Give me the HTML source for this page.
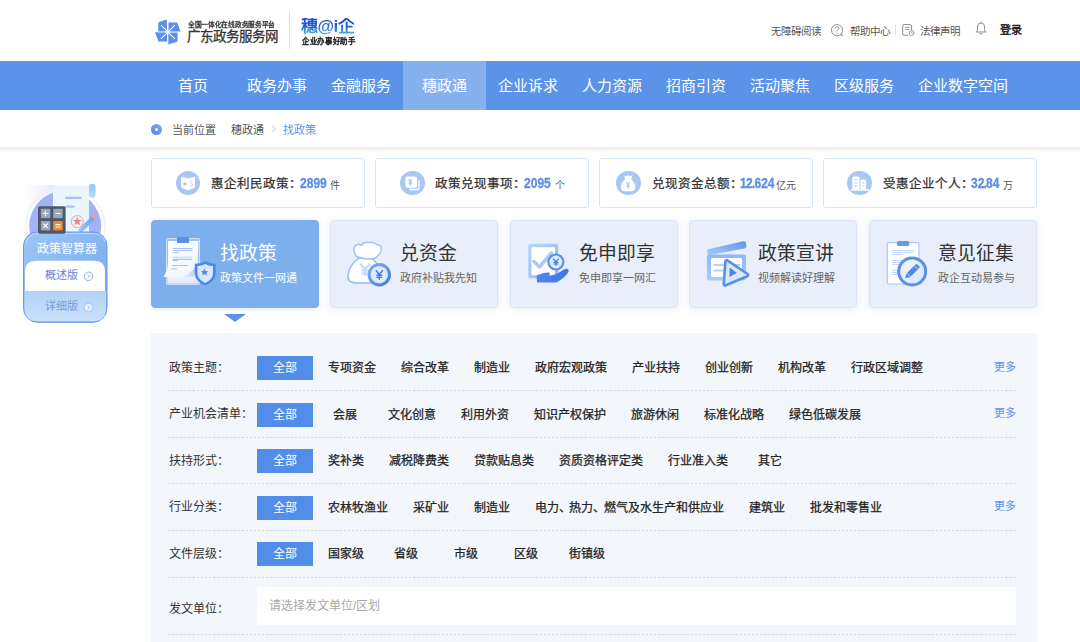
<!DOCTYPE html>
<html lang="zh-CN">
<head>
<meta charset="utf-8">
<style>
*{margin:0;padding:0;box-sizing:border-box}
html,body{width:1080px;height:642px;overflow:hidden;background:#fff;font-family:"Liberation Sans",sans-serif;color:#333}
.abs{position:absolute}
.t{position:absolute;white-space:nowrap;line-height:1}
svg{position:absolute;overflow:visible}
#nav{position:absolute;left:0;top:61px;width:1080px;height:49px;background:#5b93e8}
.nv{position:absolute;top:0;height:49px;line-height:50px;color:#fff;font-size:15px;text-align:center}
#shadow{position:absolute;left:0;top:147px;width:1080px;height:6px;background:linear-gradient(#ededed,#fff)}
.stat{position:absolute;top:158px;height:50px;width:214px;border:1px solid #d8e5f9;border-radius:3px;background:#fff}
.sic{position:absolute;top:170.5px;width:24.5px;height:24.5px;border-radius:50%;background:#a8c7f3}
.sl{position:absolute;top:178px;font-size:12.5px;-webkit-text-stroke:.25px #333;color:#333;line-height:1;white-space:nowrap}
.sn{position:absolute;top:175.5px;font-size:14.5px;font-weight:bold;color:#5b8fe6;-webkit-text-stroke:.3px #5b8fe6;line-height:1;white-space:nowrap;transform-origin:0 0;transform:scaleX(.83)}
.su{position:absolute;top:180.5px;font-size:10px;color:#555;line-height:1;white-space:nowrap}
.card{position:absolute;top:219.6px;height:88px;width:168px;border-radius:4px;background:#e9effa;border:1px solid #d9e6f9;box-shadow:0 1px 8px rgba(70,90,130,.12)}
.tt{position:absolute;top:244.5px;font-size:18.8px;color:#333;line-height:1;white-space:nowrap}
.st{position:absolute;top:273.3px;font-size:11px;color:#666;line-height:1;white-space:nowrap}
#panel{position:absolute;left:151px;top:333px;width:886px;height:320px;background:#f3f6fb}
.lbl{position:absolute;left:169px;font-size:12px;color:#333;line-height:1;white-space:nowrap}
.items{position:absolute;left:257px;height:24px;display:flex}
.it{min-width:55px;padding:0 10px;margin-left:5px;height:24px;line-height:24px;font-size:12px;-webkit-text-stroke:.25px #222;color:#222;text-align:center;white-space:nowrap}
.it.on{background:#528dea;color:#fff;margin-left:0;min-width:55.6px;-webkit-text-stroke:0}
.dash{position:absolute;left:168px;width:848px;height:1px;background:repeating-linear-gradient(90deg,#d6dce6 0 2.6px,transparent 2.6px 4.0826px)}
.more{position:absolute;left:994px;font-size:11px;color:#5b93e8;line-height:1}
.dun{margin-right:-1.5px}
.dot{margin:0 -1px}
</style>
</head>
<body>
<!-- ===== header ===== -->
<svg style="left:150px;top:14px" width="36" height="36" viewBox="0 0 36 36">
  <g fill="#5a90e8">
    <path d="M8.3 8.3 L16.9 5.5 L17.1 17.2 L8.3 17.2 Z"/>
    <path d="M18.5 8.4 L27.2 8.4 L30.6 17.4 L18.5 17.4 Z"/>
    <path d="M5 18.3 L17.1 18.3 L17.1 27.6 L8.4 27.6 Z"/>
    <path d="M18.3 19 L27.6 19 L27.6 27.6 L18.3 30.6 Z"/>
  </g>
  <rect x="8.3" y="17.2" width="19.3" height="1.6" fill="#a9c6f4"/>
  <g stroke="#fff" stroke-width="1.15">
    <line x1="11" y1="11.2" x2="24.8" y2="24.8"/>
    <line x1="24.8" y1="11.2" x2="11" y2="24.8"/>
  </g>
  <circle cx="18" cy="18" r="2" fill="#fff"/>
</svg>
<div class="t" style="left:187.6px;top:21.3px;font-size:13.5px;letter-spacing:.4px;color:#333;-webkit-text-stroke:.6px #333;transform:scale(.5);transform-origin:0 0">全国一体化在线政务服务平台</div>
<div class="t" style="left:186.5px;top:30px;font-size:13.5px;color:#333;-webkit-text-stroke:.3px #333">广东政务服务网</div>
<div class="abs" style="left:289px;top:11px;width:1px;height:38px;background:#dedede"></div>
<div class="t" style="left:301px;top:18px;font-size:17px;font-weight:bold;background:linear-gradient(#1a4ad8 15%,#2468d8 55%,#48b6dc 95%);-webkit-background-clip:text;background-clip:text;color:transparent;letter-spacing:-0.5px">穗@i企</div>
<div class="t" style="left:301.8px;top:38.3px;font-size:14.9px;letter-spacing:.4px;color:#222;-webkit-text-stroke:.9px #222;transform:scale(.5);transform-origin:0 0">企业办事好助手</div>

<div class="t" style="left:771px;top:25.5px;font-size:10.5px;color:#555">无障碍阅读</div>
<svg style="left:830px;top:23px" width="14" height="14" viewBox="0 0 14 14">
  <circle cx="7" cy="7.2" r="5.6" fill="none" stroke="#8a8a8a" stroke-width="0.95"/>
  <path d="M10.9 11.3 L12.6 13" stroke="#8a8a8a" stroke-width="1.1"/>
  <path d="M5.2 5.6 Q5.2 3.7 7 3.7 Q8.8 3.7 8.8 5.4 Q8.8 6.5 7.7 7.1 Q7 7.4 7 8.5" fill="none" stroke="#8a8a8a" stroke-width="0.9"/>
  <circle cx="7" cy="10.2" r="0.6" fill="#8a8a8a"/>
</svg>
<div class="t" style="left:850px;top:25.5px;font-size:10.5px;color:#555">帮助中心</div>
<div class="abs" style="left:895px;top:25px;width:1px;height:10px;background:#e0e0e0"></div>
<svg style="left:901.5px;top:24.3px" width="13" height="12" viewBox="0 0 13 12">
  <path d="M9.6 6 V1.9 Q9.6 0.6 8.3 0.6 H2 Q0.7 0.6 0.7 1.9 V10 Q0.7 11.3 2 11.3 H6.3" fill="none" stroke="#8c8c8c" stroke-width="1"/>
  <path d="M2.9 3.4 H7.4 M2.9 5.6 H7.4" stroke="#a0a0a0" stroke-width="1"/>
  <circle cx="9.6" cy="9" r="2.4" fill="#fff" stroke="#8c8c8c" stroke-width=".9"/>
  <path d="M9.6 7.9 V9.1 H10.5" fill="none" stroke="#8c8c8c" stroke-width=".7"/>
</svg>
<div class="t" style="left:920px;top:25.5px;font-size:10.5px;color:#555">法律声明</div>
<svg style="left:974.5px;top:20.5px" width="12" height="14" viewBox="0 0 12 14">
  <path d="M0.6 11 H11.4" stroke="#8c8c8c" stroke-width="1"/>
  <path d="M1.8 11 Q2.4 9.8 2.4 8 V6 Q2.4 2 6 2 Q9.6 2 9.6 6 V8 Q9.6 9.8 10.2 11" fill="none" stroke="#8c8c8c" stroke-width="1"/>
  <path d="M6 0.6 V2" stroke="#8c8c8c" stroke-width="1"/>
  <path d="M4.6 12.4 Q6 13.6 7.4 12.4" fill="none" stroke="#8c8c8c" stroke-width="1"/>
</svg>
<div class="t" style="left:1000px;top:25px;font-size:11px;color:#1a1a1a;-webkit-text-stroke:.45px #1a1a1a">登录</div>

<!-- ===== nav ===== -->
<div id="nav">
  <div class="nv" style="left:402.5px;width:83px;background:#86b1ef"></div>
  <div class="nv" style="left:151px;width:84px">首页</div>
  <div class="nv" style="left:235px;width:84px">政务办事</div>
  <div class="nv" style="left:319px;width:84px">金融服务</div>
  <div class="nv" style="left:402.5px;width:83px">穗政通</div>
  <div class="nv" style="left:486px;width:84px">企业诉求</div>
  <div class="nv" style="left:570px;width:84px">人力资源</div>
  <div class="nv" style="left:654px;width:84px">招商引资</div>
  <div class="nv" style="left:738px;width:84px">活动聚焦</div>
  <div class="nv" style="left:822px;width:84px">区级服务</div>
  <div class="nv" style="left:906px;width:114px">企业数字空间</div>
</div>

<!-- ===== breadcrumb ===== -->
<div class="abs" style="left:151.3px;top:123.5px;width:11px;height:11px;border-radius:50%;background:linear-gradient(45deg,#4a86e6,#7aaef0)"></div>
<div class="abs" style="left:155.3px;top:127.5px;width:3px;height:3px;border-radius:50%;background:#fff"></div>
<div class="t" style="left:172px;top:124.5px;font-size:11px;color:#555">当前位置</div>
<div class="t" style="left:231px;top:124.5px;font-size:11px;color:#555">穗政通</div>
<svg style="left:271px;top:125px" width="6" height="8" viewBox="0 0 6 8"><path d="M1 0.8 L4.6 4 L1 7.2" fill="none" stroke="#b8b8b8" stroke-width="0.8"/></svg>
<div class="t" style="left:283px;top:124.5px;font-size:11px;color:#5b93e8">找政策</div>
<div id="shadow"></div>

<!-- STATS -->
<div class="stat" style="left:151px"></div>
<div class="stat" style="left:374.6px"></div>
<div class="stat" style="left:598.8px"></div>
<div class="stat" style="left:822.8px"></div>

<div class="sic" style="left:175.9px"></div>
<svg style="left:175.9px;top:170.5px" width="24.5" height="24.5" viewBox="0 0 24.5 24.5">
  <path d="M5.1 5.7 L12.05 7.2 L19 5.7 V16.4 L12.05 19.4 L5.1 16.4 Z" fill="#fff"/>
  <path d="M8.8 10.5 L9.5 12 L11 12.2 L9.9 13.2 L10.2 14.6 L8.8 13.9 L7.5 14.6 L7.8 13.2 L6.7 12.2 L8.2 12 Z" fill="#a8c7f3"/>
  <path d="M16.8 10.8 Q16 10.2 14.9 10.4 Q13.9 10.8 14.3 11.8 Q14.9 12.4 16 12.6 Q17 13 16.7 14 Q16 14.7 14.2 14.2" fill="none" stroke="#c6dbf7" stroke-width="1"/>
</svg>
<div class="sl" style="left:210.5px">惠企利民政策：</div>
<div class="sn" style="left:299.5px">2899</div>
<div class="su" style="left:330px">件</div>

<div class="sic" style="left:400px"></div>
<svg style="left:400px;top:170.5px" width="24.5" height="24.5" viewBox="0 0 24.5 24.5">
  <path d="M9.5 18.5 H17.5 Q19 18.5 19 17 V9" fill="none" stroke="#fff" stroke-width="1.3"/>
  <rect x="5.4" y="5.4" width="11.6" height="11.4" rx="2" fill="#fff"/>
  <path d="M8.6 7.9 L10.3 10.3 L12 7.9 M10.3 10.3 V14.5 M8.6 11 H12 M8.6 12.6 H12" fill="none" stroke="#a8c7f3" stroke-width="1.2"/>
</svg>
<div class="sl" style="left:435px">政策兑现事项：</div>
<div class="sn" style="left:524px">2095</div>
<div class="su" style="left:554.5px">个</div>

<div class="sic" style="left:616px"></div>
<svg style="left:616px;top:170.5px" width="24.5" height="24.5" viewBox="0 0 24.5 24.5">
  <path d="M8 4.6 Q10 5.6 12.2 4.3 Q14.4 5.6 16.4 4.6 L15.2 8.4 Q19.2 10.8 19.2 16.3 Q19.2 20.3 15.5 20.3 H8.7 Q5 20.3 5 16.3 Q5 10.8 9.2 8.4 Z" fill="#fff"/>
  <path d="M10.3 11.3 L12.1 13.5 L13.9 11.3 M12.1 13.5 V17.2 M10.5 14.2 H13.7 M10.5 15.7 H13.7" fill="none" stroke="#a8c7f3" stroke-width="1.1"/>
</svg>
<div class="sl" style="left:651.5px">兑现资金总额：</div>
<div class="sn" style="left:739.5px"><span style="margin-right:-.8px">1</span>2<span class="dot">.</span>624</div>
<div class="su" style="left:776px">亿元</div>

<div class="sic" style="left:847px"></div>
<svg style="left:847px;top:170.5px" width="24.5" height="24.5" viewBox="0 0 24.5 24.5">
  <path d="M5.3 18.6 V7 Q5.3 5.4 6.9 5.4 H10.9 Q12.5 5.4 12.5 7 V18.6 Z" fill="#fff"/>
  <path d="M13.4 18.6 V10 Q13.4 8.5 14.9 8.5 H17.6 Q19.1 8.5 19.1 10 V18.6 Z" fill="#fff"/>
  <rect x="4.1" y="18.3" width="18" height="1.4" fill="#fff"/>
  <path d="M7.3 8.7 H10.3 M7.3 11.9 H10.3 M7.3 15 H10.3 M15 11.9 H17.6 M15 15 H17.6" stroke="#b3cff5" stroke-width="1"/>
</svg>
<div class="sl" style="left:882.5px">受惠企业个人：</div>
<div class="sn" style="left:971px">32<span class="dot">.</span>84</div>
<div class="su" style="left:1003px">万</div>

<!-- CARDS -->
<div class="card" style="left:151px;background:#7cafeb;border-color:#7cafeb;box-shadow:0 1px 5px rgba(90,140,220,.2)"></div>
<div class="card" style="left:330.3px"></div>
<div class="card" style="left:509.7px"></div>
<div class="card" style="left:689.2px"></div>
<div class="card" style="left:868.5px"></div>
<div class="abs" style="left:223.5px;top:314px;width:0;height:0;border-left:11.5px solid transparent;border-right:11.5px solid transparent;border-top:8px solid #5b93e8"></div>

<!-- card1 icon: clipboard + shield -->
<svg style="left:158px;top:230px" width="64" height="64" viewBox="0 0 64 64">
  <defs>
    <linearGradient id="c1b" x1="0" y1="0" x2="0" y2="1"><stop offset="0" stop-color="#f4f8ff"/><stop offset="1" stop-color="#dbe7fc"/></linearGradient>
    <linearGradient id="c1p" x1="0" y1="0" x2="1" y2="1"><stop offset="0" stop-color="#ffffff"/><stop offset=".7" stop-color="#f4f8ff"/><stop offset="1" stop-color="#e3ecfc"/></linearGradient>
    <linearGradient id="c1c" x1="0" y1="1" x2="1" y2="0"><stop offset="0" stop-color="#e9f0fd"/><stop offset="1" stop-color="#9dbcf2"/></linearGradient>
  </defs>
  <rect x="8.5" y="8.5" width="33" height="46" rx="1" fill="rgba(255,255,255,.25)" stroke="rgba(235,243,255,.75)" stroke-width=".9"/>
  <rect x="9.5" y="44" width="31" height="10" fill="url(#c1b)"/>
  <rect x="9.5" y="53.3" width="31" height="1" fill="#b8cff5"/>
  <path d="M10 11 H40.4 L39.6 33.8 Q33 45 25 47 H5.5 Q10 40 10 32 Z" fill="url(#c1p)"/>
  <path d="M25 47 Q33 45 39.6 33.8 Q40.5 43 36 47 Z" fill="url(#c1c)"/>
  <rect x="19" y="7" width="12" height="6" rx="1" fill="#5d8ee8"/>
  <g stroke="#a4c2f3" stroke-width="1">
    <path d="M15 18.5 H34.5 M15 20.5 H34.5 M15 22.5 H21"/>
    <path d="M14.5 29.5 H34 M14.5 30.5 H20"/>
    <path d="M14 35.5 H30 M13 39 H19"/>
  </g>
  <rect x="14.5" y="26.5" width="19.5" height="2" fill="#d2e1fa"/>
  <path d="M47.2 31.3 Q52.5 34.3 57.6 33.6 V43.5 Q57.6 51 47.2 55.6 Q36.8 51 36.8 43.5 V33.6 Q42 34.3 47.2 31.3 Z" fill="#4a86e8"/>
  <path d="M47.2 34.1 Q51.2 36.2 55 35.9 V43.5 Q55 49.2 47.2 52.9 Q39.4 49.2 39.4 43.5 V35.9 Q43.2 36.2 47.2 34.1 Z" fill="#d9e7fc"/>
  <path d="M46.5 38.6 L47.6 40.9 L50.1 41.2 L48.3 42.9 L48.8 45.4 L46.5 44.1 L44.2 45.4 L44.7 42.9 L42.9 41.2 L45.4 40.9 Z" fill="#4a86e8"/>
</svg>
<div class="tt" style="left:219.5px;color:#fff">找政策</div>
<div class="st" style="left:219.5px;color:#fff">政策文件一网通</div>

<!-- card2 icon: money bag -->
<svg style="left:340px;top:234px" width="60" height="60" viewBox="0 0 60 60">
  <defs>
    <linearGradient id="c2c" x1="0" y1="0" x2="1" y2="1"><stop offset="0" stop-color="#7fb0f5"/><stop offset="1" stop-color="#3f7ae6"/></linearGradient>
  </defs>
  <path d="M19 24 Q9 31 8 41 Q7 49 17 49 H33 Q42 49 42 41 Q41 31 31 24 Z" fill="#fff" stroke="#8dbaf5" stroke-width="1.5"/>
  <path d="M16.5 22.5 Q12.5 17 15 12 Q18 9 21.5 11 Q24 7.5 29 8.5 Q34 7.5 37 11 Q41 10 41.5 15 Q40.5 21 35 24 Q26 26.5 16.5 22.5 Z" fill="#fff" stroke="#9cc3f6" stroke-width="1.5"/>
  <path d="M20 29.5 L25 35.5 L30 29.5 M25 35.5 V42 M21.5 36.5 H28.5 M21.5 39.5 H28.5" fill="none" stroke="#c4dbf9" stroke-width="2.2"/>
  <circle cx="39.3" cy="40.7" r="10.2" fill="#dfeafc" stroke="url(#c2c)" stroke-width="3"/>
  <path d="M35.8 36.3 L39.3 40.5 L42.8 36.3 M39.3 40.5 V45.8 M36.3 41.2 H42.3 M36.3 43.4 H42.3" fill="none" stroke="#3f7ae6" stroke-width="1.4"/>
</svg>
<div class="tt" style="left:400px">兑资金</div>
<div class="st" style="left:399.5px">政府补贴我先知</div>

<!-- card3 icon: check + coin + hand -->
<svg style="left:518px;top:234px" width="60" height="60" viewBox="0 0 60 60">
  <defs>
    <linearGradient id="c3b" x1="0" y1="0" x2="1" y2="1"><stop offset="0" stop-color="#b9d7fb"/><stop offset="1" stop-color="#8ab8f5"/></linearGradient>
    <linearGradient id="c3h" x1="0" y1="0" x2="1" y2="0"><stop offset="0" stop-color="#4f88ec"/><stop offset="1" stop-color="#3c76e8"/></linearGradient>
  </defs>
  <rect x="10.2" y="9.8" width="30" height="34.4" rx="2" fill="url(#c3b)"/>
  <rect x="13.5" y="13.3" width="23.5" height="28" rx="1" fill="#fff"/>
  <path d="M16 27.5 L21.5 33 L33.5 19" fill="none" stroke="#a9cbf8" stroke-width="3.5" stroke-linecap="round" stroke-linejoin="round"/>
  <path d="M18.5 41.5 Q26 38 31.5 38.5 Q32.5 40.5 30.5 42 Q38 41 47 35 Q51 34 50.5 38 Q46 45 38 48.5 H19 Z" fill="url(#c3h)"/>
  <circle cx="37.9" cy="28" r="7.5" fill="#e0ebfd" stroke="#5a8fec" stroke-width="2.2"/>
  <path d="M35.2 24.7 L37.9 27.8 L40.6 24.7 M37.9 27.8 V31.8 M35.5 28.4 H40.3 M35.5 30 H40.3" fill="none" stroke="#3f7ae6" stroke-width="1.2"/>
</svg>
<div class="tt" style="left:579px">免申即享</div>
<div class="st" style="left:579px">免申即享一网汇</div>

<!-- card4 icon: clapper + play -->
<svg style="left:698px;top:234px" width="60" height="60" viewBox="0 0 60 60">
  <defs>
    <linearGradient id="c4t" x1="0" y1="1" x2="1" y2="0"><stop offset="0" stop-color="#a9cdfa"/><stop offset="1" stop-color="#5f95ee"/></linearGradient>
    <linearGradient id="c4b" x1="0" y1="0" x2="0" y2="1"><stop offset="0" stop-color="#8ab9f6"/><stop offset="1" stop-color="#a9cdfa"/></linearGradient>
  </defs>
  <path d="M9.3 15.6 L45.3 7.2 Q47.6 6.8 48 9 L48.4 12 Q48.6 14.2 46.5 14.6 L10.3 21.3 Q9.5 21.4 9.4 20.4 Z" fill="url(#c4t)"/>
  <rect x="9" y="20.5" width="39" height="26" rx="2.5" fill="url(#c4b)"/>
  <rect x="13" y="24" width="31" height="19" rx="1.5" fill="#fff"/>
  <path d="M15.5 31 H42 M15.5 36.5 H30" stroke="#b3d2fa" stroke-width="2"/>
  <path d="M29.3 26.3 Q27.6 25.6 27.4 27.6 L25.8 49.8 Q25.7 52 27.9 51.2 L49.3 42.2 Q51.2 41.2 49.6 40 Z" fill="#dbe8fd" stroke="#5a8fec" stroke-width="2.6" stroke-linejoin="round"/>
  <path d="M31.8 33.6 L38.8 39 L31.4 43 Z" fill="#4a84ea"/>
</svg>
<div class="tt" style="left:758px">政策宣讲</div>
<div class="st" style="left:758px">视频解读好理解</div>

<!-- card5 icon: clipboard + pen -->
<svg style="left:878px;top:234px" width="60" height="60" viewBox="0 0 60 60">
  <defs>
    <linearGradient id="c5c" x1="0" y1="0" x2="1" y2="1"><stop offset="0" stop-color="#f3f8ff"/><stop offset="1" stop-color="#d3e3fc"/></linearGradient>
  </defs>
  <rect x="9.3" y="8.6" width="31.6" height="41.4" rx="1" fill="#fff" stroke="#a6c9f6" stroke-width="1.1"/>
  <rect x="19" y="7" width="12.2" height="5" rx="1.5" fill="#6898ec"/>
  <g stroke="#bad3f8" stroke-width=".9">
    <path d="M14 16.5 H36 M14 18.5 H36 M14 20.5 H25"/>
    <path d="M14 26.5 H30 M14 28.5 H30 M14 30.5 H22"/>
    <path d="M14 36.5 H25 M14 38.5 H25 M14 40.5 H20"/>
  </g>
  <circle cx="34.2" cy="37.4" r="13.5" fill="url(#c5c)" stroke="#5a8fec" stroke-width="3"/>
  <path d="M27.3 44.3 L28.3 39.8 L37.5 30.5 Q38.5 29.6 39.5 30.5 L41.2 32.2 Q42 33.2 41.2 34.1 L32 43.3 Z" fill="#4f88ec"/>
  <path d="M29 39.2 L32.7 42.9 M36.3 31.7 L40 35.4" stroke="#dce9fd" stroke-width=".8"/>
</svg>
<div class="tt" style="left:938px">意见征集</div>
<div class="st" style="left:937.5px">政企互动易参与</div>

<!-- WIDGET -->
<svg style="left:10px;top:180px" width="100" height="145" viewBox="0 0 100 145">
  <defs>
    <linearGradient id="wbg" x1="0" y1="0" x2="1" y2="0"><stop offset="0" stop-color="#ffffff" stop-opacity="0"/><stop offset="1" stop-color="#dfe4fb"/></linearGradient>
    <linearGradient id="wpn" x1="0" y1="0" x2="1" y2="1"><stop offset="0" stop-color="#9cc6f4"/><stop offset="1" stop-color="#73a6ee"/></linearGradient>
    <linearGradient id="wlo" x1="0" y1="0" x2="0" y2="1"><stop offset="0" stop-color="#b3d2f8"/><stop offset="1" stop-color="#c9e0fa"/></linearGradient>
    <linearGradient id="wsc" x1="0" y1="0" x2="0" y2="1"><stop offset="0" stop-color="#8ec8f6"/><stop offset="1" stop-color="#b6dcfa"/></linearGradient>
    <linearGradient id="wpen" x1="0" y1="0" x2="1" y2="0"><stop offset="0" stop-color="#9fd0f8"/><stop offset="1" stop-color="#5fa6ee"/></linearGradient>
  </defs>
  <rect x="1" y="5" width="44" height="137.5" fill="url(#wbg)" opacity=".8"/>
  <circle cx="65" cy="226.7" r="0" fill="none"/>
  <circle cx="55.2" cy="46.5" r="39.5" fill="none" stroke="#eef1fd" stroke-width="1.5"/>
  <circle cx="55.2" cy="46.5" r="36" fill="#a2b2f6"/>
  <rect x="43" y="5.5" width="36" height="50" fill="#eaf5fe"/>
  <rect x="79" y="3.7" width="6.5" height="14" rx="3.2" fill="url(#wsc)"/>
  <rect x="79" y="10" width="6.5" height="45" fill="#eaf5fe" opacity="0"/>
  <path d="M56 17.8 H70.5 M56 26.6 H63.8" stroke="#a9c0f5" stroke-width="2.2" stroke-linecap="round"/>
  <circle cx="67.3" cy="41.6" r="6" fill="none" stroke="#f0a0a0" stroke-width="1"/>
  <path d="M67.3 36.8 L68.6 39.9 L71.8 40.1 L69.3 42.2 L70.1 45.3 L67.3 43.6 L64.5 45.3 L65.3 42.2 L62.8 40.1 L66 39.9 Z" fill="#f08686"/>
  <path d="M67.8 50 L81.5 36.3 L84.7 39.5 L71 53.2 L66.8 54.5 Z" fill="url(#wpen)"/>
  <path d="M81.5 36.3 L83 34.8 Q84.6 33.4 86 34.8 Q87.4 36.2 86.2 37.9 L84.7 39.5 Z" fill="#f29a9a"/>
  <path d="M66.8 54.5 L67.8 50 L71 53.2 Z" fill="#fff"/>
  <rect x="13.5" y="52" width="83.5" height="90.3" rx="14" fill="url(#wpn)" stroke="#6a98f0" stroke-width="1"/>
  <path d="M16 64 Q18 53.5 27 53.5 H84 Q93 53.5 95 62" fill="none" stroke="#d5e7fb" stroke-width=".8" opacity=".8"/>
  <rect x="28" y="26.2" width="27.6" height="27.5" rx="1.8" fill="#4e5763"/>
  <rect x="30.8" y="28.8" width="9.5" height="9.5" rx="1" fill="#97a8ba"/>
  <rect x="43.2" y="28.8" width="9.5" height="9.5" rx="1" fill="#97a8ba"/>
  <rect x="30.8" y="41" width="9.5" height="9.5" rx="1" fill="#97a8ba"/>
  <rect x="43.2" y="41" width="9.5" height="9.5" rx="1" fill="#f08a2c"/>
  <path d="M35.5 30.8 V36.3 M32.8 33.5 H38.3 M45.5 33.5 H50.5 M33.4 43.5 L37.7 47.9 M37.7 43.5 L33.4 47.9 M45.5 44.6 H50.5 M45.5 47 H50.5" stroke="#fff" stroke-width="1.1"/>
  <path d="M15 80.7 Q15 80.7 15 91 Q15 80.7 26 80.7 Z" fill="none"/>
  <path d="M15 111 V91.5 Q15 80.7 26 80.7 H84 Q95 80.7 95 91.5 V111 Z" fill="#fff"/>
  <path d="M14.5 111 H96 V128 Q96 141.3 83 141.3 H27.5 Q14.5 141.3 14.5 128 Z" fill="url(#wlo)"/>
  <circle cx="78.5" cy="96.3" r="4.3" fill="none" stroke="#7c9fe0" stroke-width=".8"/>
  <path d="M77.5 94.3 L79.5 96.3 L77.5 98.3" fill="none" stroke="#7c9fe0" stroke-width=".8"/>
  <circle cx="78.5" cy="127.5" r="4.3" fill="#e6f0fc" stroke="#9ab6e6" stroke-width=".8"/>
  <path d="M77.5 125.5 L79.5 127.5 L77.5 129.5" fill="none" stroke="#8eaee4" stroke-width=".8"/>
</svg>
<div class="t" style="left:36.5px;top:242.5px;font-size:12px;color:#fff">政策智算器</div>
<div class="t" style="left:44.5px;top:269.5px;font-size:11px;color:#5c87d8">概述版</div>
<div class="t" style="left:44.5px;top:300.5px;font-size:11px;color:#7b9bd9">详细版</div>

<!-- PANEL -->
<div id="panel"></div>
<div class="lbl" style="top:361.5px">政策主题：</div>
<div class="items" style="top:356px"><div class="it on">全部</div><div class="it">专项资金</div><div class="it">综合改革</div><div class="it">制造业</div><div class="it">政府宏观政策</div><div class="it">产业扶持</div><div class="it">创业创新</div><div class="it">机构改革</div><div class="it">行政区域调整</div></div>
<div class="more" style="top:361.5px">更多</div>
<div class="dash" style="top:390px"></div>

<div class="lbl" style="top:408px">产业机会清单：</div>
<div class="items" style="top:402.5px"><div class="it on">全部</div><div class="it">会展</div><div class="it">文化创意</div><div class="it">利用外资</div><div class="it">知识产权保护</div><div class="it">旅游休闲</div><div class="it">标准化战略</div><div class="it">绿色低碳发展</div></div>
<div class="more" style="top:408px">更多</div>
<div class="dash" style="top:437px"></div>

<div class="lbl" style="top:454.5px">扶持形式：</div>
<div class="items" style="top:449px"><div class="it on">全部</div><div class="it">奖补类</div><div class="it">减税降费类</div><div class="it">贷款贴息类</div><div class="it">资质资格评定类</div><div class="it">行业准入类</div><div class="it">其它</div></div>
<div class="dash" style="top:483px"></div>

<div class="lbl" style="top:501px">行业分类：</div>
<div class="items" style="top:495.5px"><div class="it on">全部</div><div class="it">农林牧渔业</div><div class="it">采矿业</div><div class="it">制造业</div><div class="it">电力<span class="dun">、</span>热力<span class="dun">、</span>燃气及水生产和供应业</div><div class="it">建筑业</div><div class="it">批发和零售业</div></div>
<div class="more" style="top:501px">更多</div>
<div class="dash" style="top:530px"></div>

<div class="lbl" style="top:547.5px">文件层级：</div>
<div class="items" style="top:542px"><div class="it on">全部</div><div class="it">国家级</div><div class="it">省级</div><div class="it">市级</div><div class="it">区级</div><div class="it">街镇级</div></div>
<div class="dash" style="top:576.5px"></div>

<div class="lbl" style="top:602.5px">发文单位：</div>
<div class="abs" style="left:257px;top:587px;width:759px;height:38px;background:#fff;border-radius:2px"></div>
<div class="t" style="left:269px;top:599.5px;font-size:12px;color:#a8a8a8">请选择发文单位/区划</div>
<div class="dash" style="top:634px"></div>
</body>
</html>
